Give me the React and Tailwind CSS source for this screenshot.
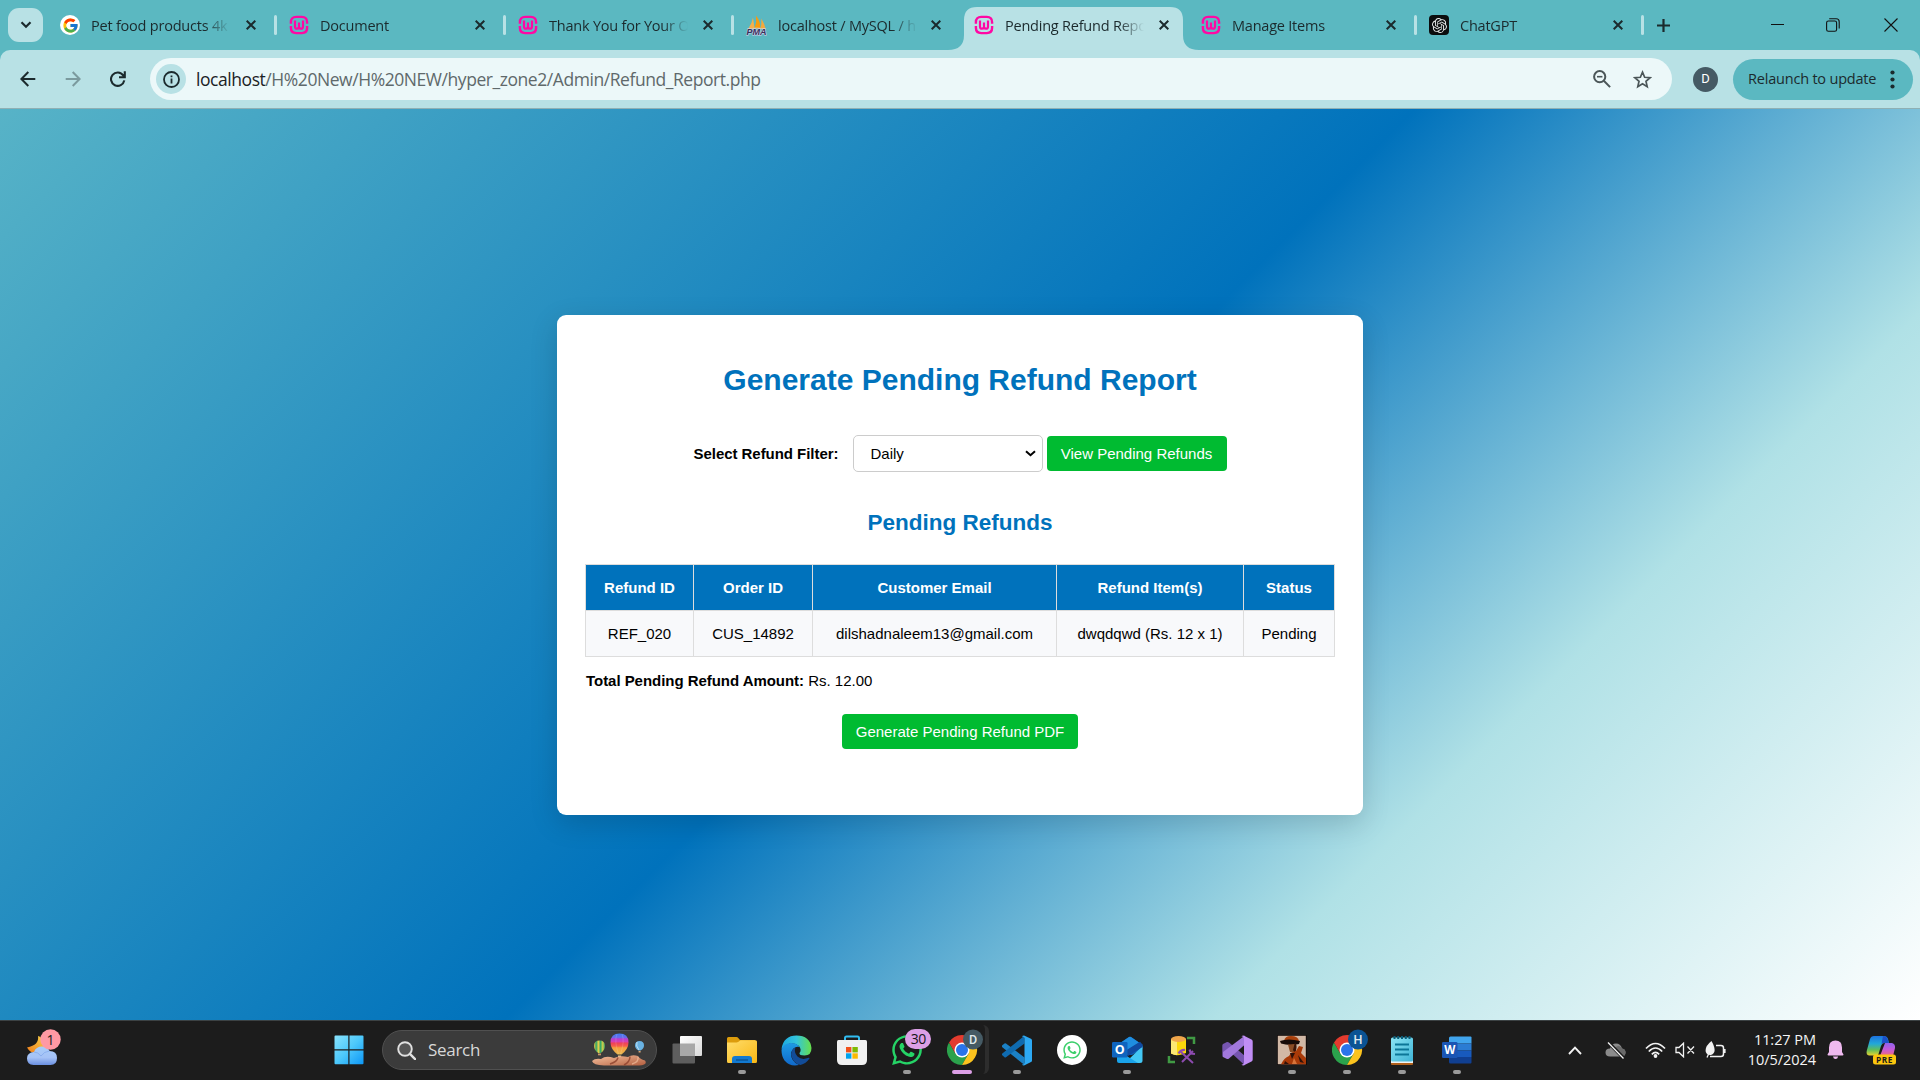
import React from "react";
import { FcGoogle } from "react-icons/fc";
import { FaWhatsapp } from "react-icons/fa";
import { SiOpenai } from "react-icons/si";

function WampIcon() {
  return (
    <svg width="20" height="20" viewBox="0 0 20 20" fill="none" stroke="#ff08a4" className="shrink-0">
      <path d="M1.900 8.700V7.200Q1.900 1.900 7.200 1.900H12.800Q18.100 1.900 18.100 7.200V8.700" strokeWidth="2.400" />
      <path d="M1.900 11V12.800Q1.900 18.100 7.200 18.100H12.800Q18.100 18.100 18.100 12.800V11" strokeWidth="2.400" />
      <path d="M6 5.600V11.400Q6 13.700 8 13.700T10 11.800V7.400M10 11.800Q10 13.700 12 13.700T14 11.400V5.600" strokeWidth="2.200" />
    </svg>
  );
}

function PmaIcon() {
  return (
    <svg width="21" height="21" viewBox="0 0 21 21" className="shrink-0">
      <path d="M2.500 13.500Q6 8 7 2.400L8.500 13.200Z" fill="#f7b04a" />
      <path d="M8.600 13Q11 7 10 .6Q14.500 6.500 14.300 13.200Z" fill="#f89c0e" />
      <path d="M14.600 13Q16 8 15 3.500Q18.700 8.500 19.500 13.500Z" fill="#f6a93b" />
      <path d="M1.500 14Q10 12.200 20 13.800" stroke="#e9c48d" fill="none" />
      <text x="0.500" y="20.400" textLength="20" lengthAdjust="spacingAndGlyphs" fontSize="8.200" fontWeight="800" fontStyle="italic" fontFamily="Liberation Sans" fill="#35305a" stroke="#d9d4ee" strokeWidth=".9" paintOrder="stroke">PMA</text>
    </svg>
  );
}

function GptIcon() {
  return (
    <span className="flex size-5 shrink-0 items-center justify-center rounded-[4px] bg-[#0b0d0e] text-[#e8eaea]">
      <SiOpenai size={15} />
    </span>
  );
}

function GIcon() {
  return (
    <span className="flex size-5 shrink-0 items-center justify-center rounded-full bg-white">
      <FcGoogle size={17} />
    </span>
  );
}

function CloseX() {
  return (
    <svg width="10" height="10" viewBox="0 0 10 10" stroke="#1b2a2d" strokeWidth="2" className="shrink-0">
      <path d="M.7.7l8.600 8.600M9.300.7L.7 9.300" />
    </svg>
  );
}

const tabs = [
  { title: "Pet food products 4k", icon: GIcon, width: "w-[229px]", sep: true },
  { title: "Document", icon: WampIcon, width: "w-[229px]", sep: true },
  { title: "Thank You for Your O", icon: WampIcon, width: "w-[228px]", sep: true },
  { title: "localhost / MySQL / h", icon: PmaIcon, width: "w-[228px]" },
  { title: "Pending Refund Repo", icon: WampIcon, width: "w-[227px]", active: true },
  { title: "Manage Items", icon: WampIcon, width: "w-[228px]", sep: true },
  { title: "ChatGPT", icon: GptIcon, width: "w-[227px]", sep: true },
];

function Tab({ title, icon: Icon, width, sep, active }) {
  return (
    <div className={"relative flex h-[50px] shrink-0 items-center " + width}>
      {active && (
        <svg className="absolute left-[-14px] top-[7px]" width="252" height="43" viewBox="0 0 252 43">
          <path d="M0 43Q16 43 16 28V13Q16 0 29 0H222Q235 0 235 13V28Q235 43 251 43Z" fill="#b8e1e5" />
        </svg>
      )}
      <div className="relative flex w-full items-center pl-3 pr-[21px]">
        <Icon />
        <span className="ml-[11px] mr-[12px] block flex-1 whitespace-nowrap pt-[1px] text-[14.500px] leading-[21px] tracking-[-0.220px] text-[#1b2a2d] [mask-image:linear-gradient(to_right,#000_114px,transparent_139px)]">
          {title}
        </span>
        <span className="flex"><CloseX /></span>
      </div>
      {sep && <span className="absolute right-0 top-[15px] h-5 w-[3px] rounded-full bg-[#b8e1e5]" />}
    </div>
  );
}

function TabStrip() {
  return (
    <div className="flex h-[50px] items-center bg-[#5bb8c1]">
      <div className="ml-2 mr-[5px] flex h-[34px] w-[35px] shrink-0 items-center justify-center rounded-[11px] bg-[#b8e1e5]">
        <svg width="12" height="8" viewBox="0 0 12 8" fill="none" stroke="#1b2a2d" strokeWidth="2.200"><path d="M1.500 1.300L6 5.700l4.500-4.400" /></svg>
      </div>
      {tabs.map((t) => <Tab key={t.title} {...t} />)}
      <svg className="ml-[13px] shrink-0" width="13" height="13" viewBox="0 0 13 13" stroke="#1b2a2d" strokeWidth="2.200"><path d="M6.500 0v13M0 6.500h13" /></svg>
      <div className="ml-auto mr-[22px] flex items-center">
        <svg width="13" height="14" viewBox="0 0 13 14" stroke="#111"><path d="M0 6.500h13" /></svg>
        <svg className="ml-[42px]" width="14" height="14" viewBox="0 0 14 14" fill="none" stroke="#111" strokeWidth="1.100">
          <rect x=".6" y="3" width="10" height="10.300" rx="1.800" />
          <path d="M3.200.7h7Q13.200.7 13.200 3.700V10.500" />
        </svg>
        <svg className="ml-[44px]" width="14" height="14" viewBox="0 0 14 14" stroke="#111" strokeWidth="1.100"><path d="M.5.5l13 13M13.500.5l-13 13" /></svg>
      </div>
    </div>
  );
}

function Toolbar() {
  return (
    <div className="bg-[#5bb8c1]">
      <div className="flex h-[59px] items-center rounded-t-[10px] border-b border-[#8fb0b4] bg-[#b8e1e5]">
        <svg className="ml-5 shrink-0" width="16" height="16" viewBox="0 0 16 16" fill="none" stroke="#1b2a2d" strokeWidth="2"><path d="M15.300 8H2M8.300 1L1.400 8l6.900 7" /></svg>
        <svg className="ml-[29px] shrink-0" width="16" height="16" viewBox="0 0 16 16" fill="none" stroke="#7b9a9e" strokeWidth="2"><path d="M.7 8H14M7.700 1l6.900 7-6.900 7" /></svg>
        <svg className="ml-[29px] shrink-0" width="16" height="16" viewBox="0 0 16 16" fill="none" stroke="#1b2a2d" strokeWidth="2.100"><path d="M14.300 9.400A6.700 6.700 0 1 1 13.200 4.300L14.600 6M14.800.3V6.200H9" /></svg>
        <div className="ml-6 flex h-[42px] w-[1522px] shrink-0 items-center rounded-full bg-[#ecf8f9] pl-[6px] pr-5">
          <span className="flex size-[30px] items-center justify-center rounded-full bg-[#b8e1e5]">
            <svg width="17" height="17" viewBox="0 0 17 17" fill="none" stroke="#1b2a2d" strokeWidth="1.800"><circle cx="8.500" cy="8.500" r="7.500" /><path d="M8.500 7.500v5M8.500 4.400v1.900" /></svg>
          </span>
          <span className="ml-[10px] whitespace-nowrap text-[17.500px] leading-6 tracking-[-0.440px] text-[#5f696b]"><span className="text-[#1b2225]">localhost</span>/H%20New/H%20NEW/hyper_zone2/Admin/Refund_Report.php</span>
          <svg className="ml-auto" width="18" height="18" viewBox="0 0 18 18" fill="none" stroke="#4b5658" strokeWidth="2"><circle cx="6.700" cy="6.700" r="5.600" /><path d="M10.800 10.800l6.300 6.300" /><path d="M4 6.700h5.400" strokeWidth="1.600" /></svg>
          <svg className="ml-[22px]" width="19" height="19" viewBox="0 0 19 19" fill="none" stroke="#4b5658" strokeWidth="1.700"><path d="M9.500 2.200l2.150 5.050 5.450.47-4.130 3.580 1.240 5.330-4.710-2.830-4.710 2.830 1.240-5.330L1.900 7.720l5.450-.47z" /></svg>
        </div>
        <span className="ml-[21px] flex size-[25px] shrink-0 items-center justify-center rounded-full bg-[#455a64] text-[13px] text-white [font-family:Roboto,sans-serif]">D</span>
        <div className="ml-[15px] flex h-[41px] w-[180px] shrink-0 items-center rounded-full bg-[#5bb8c1] pl-[15px]">
          <span className="whitespace-nowrap text-[14.500px] tracking-[-0.200px] text-[#1b2a2d]">Relaunch to update</span>
          <svg className="ml-auto mr-[18px]" width="5" height="19" viewBox="0 0 5 19" fill="#1b2a2d"><circle cx="2.500" cy="2.500" r="2.100" /><circle cx="2.500" cy="9.500" r="2.100" /><circle cx="2.500" cy="16.500" r="2.100" /></svg>
        </div>
      </div>
    </div>
  );
}

const columns = [
  ["Refund ID", "REF_020"],
  ["Order ID", "CUS_14892"],
  ["Customer Email", "dilshadnaleem13@gmail.com"],
  ["Refund Item(s)", "dwqdqwd (Rs. 12 x 1)"],
  ["Status", "Pending"],
];

function ReportPage() {
  return (
    <main className="flex h-[911px] items-center justify-center bg-[linear-gradient(135deg,#57b3c7_0%,#0072bc_50%,#b0e1e6_75%,#ffffff_100%)] text-[15px] text-black [font-family:'Liberation_Sans',Arial,sans-serif]">
      <section className="mt-[1px] h-[500px] w-[806px] rounded-[9px] bg-white px-7 pt-12 shadow-[0_8px_28px_rgba(0,0,0,0.15)]">
        <h1 className="text-center text-[30px] font-bold leading-[34px] text-[#0072bc]">Generate Pending Refund Report</h1>
        <form className="mt-[38px] flex items-center justify-center">
          <label className="pt-[1px] font-bold tracking-[-0.040px]">Select Refund Filter:</label>
          <div className="ml-[14px] flex h-[37px] w-[190px] items-center justify-between rounded-[5px] border border-[#ccc] bg-white pl-[17px] pr-[6px]">
            <span className="pt-[1px]">Daily</span>
            <svg width="11" height="7" viewBox="0 0 11 7" fill="none" stroke="#000" strokeWidth="2"><path d="M1 1.200L5.500 5.200 10 1.200" /></svg>
          </div>
          <button type="button" className="ml-1 h-[35px] w-[180px] rounded-[4px] bg-[#00bb31] pt-[2px] text-white">View Pending Refunds</button>
        </form>
        <h2 className="mt-[38px] text-center text-[22.500px] font-bold leading-[26px] text-[#0072bc]">Pending Refunds</h2>
        <table className="mt-[28px] w-[750px] table-fixed border-collapse text-center">
          <colgroup>
            <col className="w-[108px]" /><col className="w-[119px]" /><col className="w-[244px]" /><col className="w-[187px]" /><col className="w-[91px]" />
          </colgroup>
          <thead>
            <tr className="h-[46px] bg-[#0072bc] text-white">{columns.map(([h]) => <th key={h} className="border border-[#ddd] pt-[2px] font-bold">{h}</th>)}</tr>
          </thead>
          <tbody>
            <tr className="h-[46px] bg-[#f8f9fb]">{columns.map(([h, v]) => <td key={h} className="border border-[#ddd] pt-[1px]">{v}</td>)}</tr>
          </tbody>
        </table>
        <p className="mt-[15px] pl-[1px] leading-[18px]"><strong className="tracking-[-0.040px]">Total Pending Refund Amount:</strong> Rs. 12.00</p>
        <div className="mt-6 flex justify-center">
          <button type="button" className="h-[35px] w-[236px] rounded-[4px] bg-[#00bb31] pt-[1px] text-white">Generate Pending Refund PDF</button>
        </div>
      </section>
    </main>
  );
}

function WeatherIcon() {
  return (
    <svg width="36" height="38" viewBox="0 0 36 38">
      <defs>
        <linearGradient id="moon" x1="1" y1="0" x2="0" y2="1"><stop stopColor="#f8d24a" /><stop offset="1" stopColor="#f07d1a" /></linearGradient>
        <linearGradient id="cloud" x1="0" y1="0" x2="0" y2="1"><stop stopColor="#a9cdf9" /><stop offset=".6" stopColor="#a5c2f6" /><stop offset="1" stopColor="#6a8fe0" /></linearGradient>
      </defs>
      <path d="M12 7Q13.500 16 1 18.500Q4 24 10 24Q19 22 19 14Q16 8 12 7Z" fill="url(#moon)" />
      <path d="M7.500 36Q1 35.500 1 29.500T8 23Q10 17.500 16 17.500T23.500 22Q31 22 31 29T24.500 36Z" fill="url(#cloud)" />
      <path d="M8 23Q12 23 15 27Q18 22.500 23.500 22" fill="none" stroke="#7fa5ea" opacity=".7" />
      <circle cx="24.500" cy="10.500" r="10.200" fill="#ff99a4" />
      <text x="24.500" y="15.500" textAnchor="middle" fontSize="14" fontFamily="Open Sans" fill="#1b1b1b">1</text>
    </svg>
  );
}

function WindowsIcon() {
  return (
    <svg width="30" height="30" viewBox="0 0 30 30">
      <defs><linearGradient id="win" gradientUnits="userSpaceOnUse" x1="0" y1="0" x2="30" y2="30"><stop stopColor="#8be4fd" /><stop offset=".5" stopColor="#4cc8fb" /><stop offset="1" stopColor="#0a94f5" /></linearGradient></defs>
      <path fill="url(#win)" d="M.5 1.500Q.5.500 1.500.500H14.300V14.300H.5ZM15.500.500H28.500Q29.500.500 29.500 1.500V14.300H15.500ZM.5 15.500H14.300V29.300H1.500Q.5 29.300.5 28.300ZM15.500 15.500H29.500V28.300Q29.500 29.300 28.500 29.300H15.500Z" />
    </svg>
  );
}

function Balloons() {
  return (
    <svg width="55" height="34" viewBox="0 0 55 34">
      <defs>
        <linearGradient id="bal" x1="0" y1="0" x2="0" y2="1">
          <stop stopColor="#3c7bf0" /><stop offset=".2" stopColor="#6d6be8" /><stop offset=".25" stopColor="#b63fd0" /><stop offset=".4" stopColor="#d840b0" /><stop offset=".45" stopColor="#ee4058" /><stop offset=".6" stopColor="#f4604a" /><stop offset=".68" stopColor="#f5a03e" /><stop offset="1" stopColor="#e6b650" />
        </linearGradient>
        <linearGradient id="balg"><stop stopColor="#f0c23c" /><stop offset=".2" stopColor="#2fa86a" /><stop offset=".4" stopColor="#e9cf48" /><stop offset=".6" stopColor="#2fa86a" /><stop offset=".8" stopColor="#d9cf48" /><stop offset="1" stopColor="#2f9a6a" /></linearGradient>
        <linearGradient id="rock" x1="0" y1="0" x2="1" y2="1"><stop stopColor="#f6c3a0" /><stop offset="1" stopColor="#b45f40" /></linearGradient>
      </defs>
      <path d="M2 13Q2 7.500 7.500 7.500T13 13Q13 17 8.800 20H6.200Q2 17 2 13Z" fill="url(#balg)" />
      <path d="M6 20.500h3v1.800H6z" fill="#c89a68" />
      <path d="M18.500 9.500Q18.500.500 27.500.500T36.500 9.500Q36.500 16 29.500 21.500H25.500Q18.500 16 18.500 9.500Z" fill="url(#bal)" />
      <path d="M25 1Q22 8 26.500 21M30 1Q33 8 28.500 21" fill="none" stroke="#fff" opacity=".15" />
      <path d="M26 22.500h3.200v2.500H26z" fill="#e9c890" />
      <path d="M43 12.500Q43 8 47.500 8T52 12.500Q52 15.500 48.500 17.500H46.500Q43 15.500 43 12.500Z" fill="#69b2e2" />
      <path d="M45 9Q43.500 13 47 17" fill="none" stroke="#bfe2f5" />
      <path d="M46.600 18h2v1.500h-2z" fill="#d9a878" />
      <path d="M0 28Q3 25 9 26Q14 22 22 25Q28 22 36 24Q40 21 46 23Q48 26 53 27.500Q56 32 47 32.500H12Q1 32 0 28Z" fill="url(#rock)" />
      <path d="M18 31Q25 29 26 24.500M32 32Q38 29 38 23.500" stroke="#8c402c" strokeWidth="1.500" fill="none" opacity=".8" />
      <path d="M40 31Q47 29 46 24" stroke="#f7c9a8" strokeWidth="1.500" fill="none" opacity=".6" />
    </svg>
  );
}

function TaskViewIcon() {
  return (
    <svg width="30" height="30" viewBox="0 0 30 30">
      <defs><linearGradient id="tv" x1="0" y1="0" x2="1" y2="1"><stop stopColor="#fff" /><stop offset="1" stopColor="#d9d9d9" /></linearGradient></defs>
      <rect x="0.500" y="8.500" width="22.500" height="20" rx="1" fill="#5e5e5e" />
      <rect x="8" y="1" width="22" height="20" rx="1" fill="url(#tv)" />
      <path d="M8 8.500h15V21H8z" fill="#a8a8a8" />
    </svg>
  );
}

function FolderIcon() {
  return (
    <svg width="30" height="30" viewBox="0 0 30 30">
      <defs><linearGradient id="fold" x1="0" y1="0" x2="1" y2="1"><stop stopColor="#ffdd6b" /><stop offset="1" stopColor="#f9b714" /></linearGradient></defs>
      <path d="M0 3.500Q0 2 1.500 2H9.500Q10.500 2 11.500 3.200L13 5H28V12H0Z" fill="#dc9c0c" />
      <path d="M0 7.500H9.500Q10.500 7.500 11.500 6.700L13.500 5.200H28.500Q30 5.200 30 6.700V26.500Q30 28 28.500 28H1.500Q0 28 0 26.500Z" fill="url(#fold)" />
      <path d="M5 28V24Q5 21 8 21H22Q25 21 25 24V28Z" fill="#1279d0" />
      <path d="M9 25H21" stroke="#0a4f8f" strokeWidth="1.300" />
    </svg>
  );
}

function EdgeIcon() {
  return (
    <svg width="31" height="31" viewBox="0 0 31 31">
      <defs>
        <linearGradient id="e1"><stop stopColor="#1ca8e0" /><stop offset=".5" stopColor="#33c4dc" /><stop offset="1" stopColor="#67e04a" /></linearGradient>
        <linearGradient id="e2" x1="0" y1="0" x2="0" y2="1"><stop stopColor="#1e9be4" /><stop offset="1" stopColor="#1069cb" /></linearGradient>
      </defs>
      <path d="M.5 14Q2.500.500 15.500.500Q29 .5 30.500 13Q30.500 20.500 23.500 20.500Q18 20.500 18.500 18Q21 15 18 11Q10 4.500.5 14Z" fill="url(#e1)" />
      <path d="M.5 15Q2 8 10 8Q16 8 18.500 12Q12.500 10.500 10 18Q9.500 26 18 30Q9 32 3.500 25.500Q.5 21 .5 15Z" fill="url(#e2)" />
      <path d="M14.500 12.500Q9 15 10.500 21.500Q13 29 19.500 30Q25 28.500 28.500 23.500Q28.500 22.500 27.500 22.800Q21 25.500 16.500 21.500Q12.500 17 14.500 12.500Z" fill="#124c98" />
    </svg>
  );
}

function StoreIcon() {
  return (
    <svg width="30" height="30" viewBox="0 0 30 30">
      <path d="M8 6V3Q8 1.500 9.500 1.500H20.500Q22 1.500 22 3V6" fill="none" stroke="#31bdf2" strokeWidth="2" />
      <path d="M0 6.500Q0 5 1.500 5H28.500Q30 5 30 6.500V25Q30 30 25 30H5Q0 30 0 25Z" fill="#f0f0f0" />
      <path d="M9 12h5.400v5.400H9z" fill="#f1511b" /><path d="M15.400 12h5.400v5.400h-5.400z" fill="#7fba00" /><path d="M9 18.300h5.400v5.400H9z" fill="#00a4ef" /><path d="M15.400 18.300h5.400v5.400h-5.400z" fill="#fbb900" />
    </svg>
  );
}

function WhatsAppBadge() {
  return (
    <span className="relative flex size-[31px] items-center justify-center text-[#25d366]">
      <FaWhatsapp size={34} className="shrink-0" />
      <span className="absolute -top-[6px] left-[14px] flex h-5 w-[26px] items-center justify-center rounded-full bg-[#dc9fe6] text-[14px] tracking-[-0.500px] text-[#161616]">30</span>
    </span>
  );
}

function ChromeIcon({ letter, color }) {
  return (
    <svg width="40" height="40" viewBox="0 0 40 40" className="shrink-0">
      <path d="M2 14.500A15 15 0 0 0 15 37L21.500 25.800L15 22L8.500 25.800Z" fill="#2ba24c" />
      <path d="M28 14.500A15 15 0 0 1 15 37L21.500 25.800Q23 20 19 15H28.300Z" fill="#fcc31e" />
      <path d="M2 14.500A15 15 0 0 1 28 14.500V15H15Q9 15 8 21L8.500 25.800Z" fill="#e33b2e" />
      <circle cx="15" cy="22" r="7.500" fill="#fff" /><circle cx="15" cy="22" r="6" fill="#2a74ea" />
      <circle cx="26" cy="11.500" r="10" fill={color} />
      <text x="26" y="16" textAnchor="middle" fontSize="12.500" fontWeight="500" fontFamily="Roboto" fill="#dfe7ec">{letter}</text>
    </svg>
  );
}

function VsCodeIcon() {
  return (
    <svg width="30" height="31" viewBox="0 0 30 31">
      <path d="M0 10.500L2.500 8.500Q3.300 8 4 8.600L22.500 22.500V30L.3 12.200Q-.4 11.400 0 10.500Z" fill="#1b81c6" />
      <path d="M0 20L2.500 22.300Q3.300 22.800 4 22.200L22.500 8.500V.700L.3 18.500Q-.4 19.200 0 20Z" fill="#0f6bb0" />
      <path d="M22 .5L29 3.800Q30 4.400 30 5.500V25.500Q30 26.600 29 27.100L22 30.500Q20.500 30.500 20 29.500Q22.500 29.500 22.500 28V3Q22.500 1.500 20 1.500Q20.500.500 22 .5Z" fill="#2da9f3" />
    </svg>
  );
}

function WhatsAppRound() {
  return <span className="flex size-[30px] items-center justify-center rounded-full bg-white text-[#3ccf6b]"><FaWhatsapp size={20} /></span>;
}

function OutlookIcon() {
  return (
    <svg width="31" height="30" viewBox="0 0 31 30">
      <path d="M5 10L17 2Q18 1.500 19 2L30.500 10V14L20 20H5Z" fill="#0f5fb4" />
      <path d="M9 7.500L17 2Q18 1.500 19 2L27 7.500L14 16H9Z" fill="#1f8ee0" />
      <path d="M13 28L30.500 11V25.500Q30.500 28 28 28Z" fill="#43c8f5" />
      <path d="M13 16L28 6.800L30.500 9.500V12L16 21Z" fill="#104aa0" />
      <path d="M5 15L26 28H7Q5 28 5 26Z" fill="#1aa3ea" />
      <rect x="0" y="7" width="15.500" height="15.500" rx="1.200" fill="#0f64be" />
      <text x="7.800" y="19" textAnchor="middle" fontSize="12.500" fontWeight="700" fontFamily="Open Sans" fill="#fff">O</text>
    </svg>
  );
}

function SsmsIcon() {
  return (
    <svg width="30" height="30" viewBox="0 0 30 30" fill="none">
      <path d="M20 3h7v6M2 21v6h6" stroke="#409a44" strokeWidth="2.500" />
      <path d="M4 4v14.500Q11 22 19 18V4Z" fill="#fbd80b" /><path d="M4 4v14.500Q7 20 10 20.200V4Z" fill="#fbe874" />
      <ellipse cx="11.500" cy="4" rx="7.500" ry="3" fill="#f0a64b" />
      <path d="M15 27L26 16M14 17l12 11" stroke="#8d4bb0" strokeWidth="2" /><path d="M11.500 18.500Q14 14.500 18 15M22.500 14.500l1.500 4 4 .500" stroke="#8d4bb0" strokeWidth="2.200" />
    </svg>
  );
}

function VisualStudioIcon() {
  return (
    <svg width="31" height="31" viewBox="0 0 31 31">
      <path d="M1 9L5 7Q6 6.700 7 7.500L23 21V30.500L5 14V17L1 22Q.3 21.500.3 20.500V10.500Q.3 9.500 1 9Z" fill="#7655b0" />
      <path d="M1 22L5 24Q6 24.300 7 23.500L23 9.500V.5L1 17Z" fill="#a178dc" />
      <path d="M21.500.500L29.500 4.500Q30.700 5.200 30.700 6.500V24.500Q30.700 25.800 29.500 26.500L21.500 30.500Q20 30.500 19.500 29.500Q22 30 22 27.500V3.500Q22 1 19.500 1.500Q20 .5 21.500.500Z" fill="#c18df5" />
    </svg>
  );
}

function PortraitIcon() {
  return (
    <svg width="30" height="30" viewBox="0 0 30 30">
      <path d="M0 0h30v30H0z" fill="#120c0a" /><path d="M.8.8h28v28.400H.8z" fill="#d2b9a6" />
      <path d="M7 6Q8 .8 14 1Q21 1 22 6L20 8H8Z" fill="#a8400c" />
      <path d="M3 6Q11 3 23 6L22 9Q12 11 4 8.500Z" fill="#160b08" />
      <path d="M11 9.500L19 9Q20 14 17.500 18L13 17Z" fill="#8b4c24" /><path d="M18 7Q21 12 18 18L16 15Z" fill="#3a1508" />
      <path d="M4 29.200Q7 23 12 21L14 18L19 16L22 11L26 12L24 18L29 23V29.200Z" fill="#a93a08" />
      <path d="M13 18L18 18L15 24ZM8 26L12 29H7ZM21 20L27 28L23 27Z" fill="#30120a" /><path d="M17 23L20 29H15Z" fill="#d8743a" />
    </svg>
  );
}

function NotepadIcon() {
  return (
    <svg width="24" height="31" viewBox="0 0 24 31">
      <defs><linearGradient id="note" x1="0" y1="0" x2="1" y2="1"><stop stopColor="#8be4f3" /><stop offset="1" stopColor="#3fb4d6" /></linearGradient></defs>
      <path d="M1 26h22v3Q23 30 22 30H2Q1 30 1 29Z" fill="#b0601c" /><path d="M1 25h22v3H1z" fill="#eef4f5" />
      <rect x="1" y="2.500" width="22" height="24" rx="1.500" fill="url(#note)" />
      <path d="M4.500 1v3M8.200 1v3M12 1v3M15.800 1v3M19.500 1v3" stroke="#0b5c78" strokeWidth="2" />
      <path d="M5 9.500h14M5 14.500h14M5 19.500h14" stroke="#0c7697" strokeWidth="1.900" />
    </svg>
  );
}

function WordIcon() {
  return (
    <svg width="30" height="30" viewBox="0 0 30 30">
      <path d="M7 3Q7 1.500 8.500 1.500H28.500Q29.500 1.500 29.500 2.500V8.500H7Z" fill="#41a5ee" /><path d="M7 8.500h22.500v7H7z" fill="#2b7cd3" /><path d="M7 15.500h22.500v6.500H7z" fill="#185abd" /><path d="M7 22h22.500v5.500Q29.500 28.500 28.500 28.500H8.500Q7 28.500 7 27Z" fill="#103f91" />
      <rect x="0" y="7" width="15.500" height="16" rx="1.300" fill="#1a55b4" />
      <text x="7.800" y="19" textAnchor="middle" fontSize="11.500" fontWeight="700" fontFamily="Open Sans" fill="#fff">W</text>
    </svg>
  );
}

const apps = [
  { id: "taskview", el: <TaskViewIcon /> },
  { id: "files", el: <FolderIcon />, run: true },
  { id: "edge", el: <EdgeIcon /> },
  { id: "store", el: <StoreIcon /> },
  { id: "whatsapp", el: <WhatsAppBadge />, run: true },
  { id: "chrome-d", el: <span className="-mt-[4px] ml-[10px] flex"><ChromeIcon letter="D" color="#455a64" /></span>, active: true },
  { id: "vscode", el: <VsCodeIcon />, run: true },
  { id: "whatsapp-web", el: <WhatsAppRound /> },
  { id: "outlook", el: <OutlookIcon />, run: true },
  { id: "ssms", el: <SsmsIcon /> },
  { id: "vs", el: <VisualStudioIcon /> },
  { id: "game", el: <PortraitIcon />, run: true },
  { id: "chrome-h", el: <span className="-mt-[4px] ml-[10px] flex"><ChromeIcon letter="H" color="#0b5394" /></span>, run: true },
  { id: "notepad", el: <NotepadIcon />, run: true },
  { id: "word", el: <WordIcon />, run: true },
];

function Tray() {
  return (
    <div className="ml-auto flex h-full items-center">
      <svg width="14" height="9" viewBox="0 0 14 9" fill="none" stroke="#f2f2f2" strokeWidth="1.900"><path d="M1 8l6-6.300L13 8" /></svg>
      <svg className="ml-[23px]" width="21" height="17" viewBox="0 0 21 17">
        <path d="M5 14.500Q.5 14.500.5 10.500T5 6.500Q6.500 1.500 11 1.500T17 6.500Q20.500 7 20.500 10.500T17 14.500Z" fill="#8b8b8b" /><path d="M9 7Q13 1.500 17 6.500Q20.500 7 20.500 10.500T17 14.500Z" fill="#6a6a6a" />
        <path d="M3.500.500l15 15.500" stroke="#1c1c1c" strokeWidth="3.500" /><path d="M3 .5l15.500 16" stroke="#f5f5f5" strokeWidth="1.300" />
      </svg>
      <svg className="ml-[19px]" width="21" height="17" viewBox="0 0 21 17" fill="none" stroke="#f2f2f2" strokeWidth="1.700">
        <path d="M1 6.500Q10.500-3.500 20 6.500M3.800 9.500Q10.500 2.500 17.200 9.500M6.800 12.300Q10.500 8.500 14.200 12.300" /><circle cx="10.500" cy="14" r="1.900" fill="#f2f2f2" stroke="none" />
      </svg>
      <svg className="ml-[9px]" width="20" height="16" viewBox="0 0 20 16" fill="none" stroke="#f2f2f2" strokeWidth="1.300"><path d="M1 5.500H4L8.500 1.200V14.800L4 10.500H1ZM12.500 4.500l6.500 7M19 4.500l-6.500 7" /></svg>
      <svg className="ml-[10px]" width="22" height="18" viewBox="0 0 22 18" fill="none" stroke="#f2f2f2">
        <path d="M11 4.500H16Q18.500 4.500 18.500 7V13Q18.500 15.500 16 15.500H5" strokeWidth="1.500" /><path d="M19.500 8v4" strokeWidth="2.200" />
        <path d="M6.500 0Q-.5 5.500.8 11Q2 14.500 6 14Q13 11.500 6.500 0Z" fill="#f2f2f2" stroke="none" /><path d="M3.600 13L2 16.500" strokeWidth="1.300" />
      </svg>
      <div className="-mt-[1px] ml-[12px] w-[77px] whitespace-nowrap text-right text-[14.500px] leading-5 tracking-[-0.050px] text-[#f5f5f5]">
        <div>11:27 PM</div><div>10/5/2024</div>
      </div>
      <svg className="ml-[11px]" width="17" height="20" viewBox="0 0 17 20" fill="#efb9ef"><path d="M8.500.500Q15 .5 15 7.500V12L16.500 14.500Q16.500 15.500 15.500 15.500H1.500Q.5 15.500.5 14.500L2 12V7.500Q2 .5 8.500.500ZM6 16.500h5.200Q10.500 19 8.500 19T6 16.500Z" /></svg>
      <svg className="ml-[22px] mr-[23px]" width="31" height="30" viewBox="0 0 31 30">
        <defs>
          <linearGradient id="cp1" x1="0" y1="0" x2="0" y2="1"><stop stopColor="#1d73e0" /><stop offset=".4" stopColor="#22a8d8" /><stop offset=".7" stopColor="#5fbd5c" /><stop offset="1" stopColor="#e8d22e" /></linearGradient>
          <linearGradient id="cp2" x1="0" y1="0" x2="0" y2="1"><stop stopColor="#8f63ee" /><stop offset=".5" stopColor="#c65bd8" /><stop offset="1" stopColor="#f0687c" /></linearGradient>
        </defs>
        <path d="M8 1H18Q21 1 22 4L23 8H18Q16 8 15 11L12.500 19Q12 20.500 10 20.500H3Q0 20 .7 16L4 4Q5 1 8 1Z" fill="url(#cp1)" />
        <path d="M17 1Q20.500 1 21.500 4L23 8H18Q16 8 15.500 9Z" fill="#1b50c8" />
        <path d="M19 8H26Q29.500 9 29 13L27 21H14Z" fill="url(#cp2)" />
        <rect x="7" y="19.500" width="23" height="10" rx="2.500" fill="#fcc60e" />
        <text x="18.500" y="27.600" textAnchor="middle" fontSize="8.300" fontWeight="700" letterSpacing=".5" fontFamily="Open Sans" fill="#1b1b1b">PRE</text>
      </svg>
    </div>
  );
}

function Taskbar() {
  return (
    <footer className="flex h-[60px] items-center bg-[#1c1c1c] shadow-[inset_0_1px_0_#3c4244]">
      <div className="-mt-[5px] ml-[26px] flex w-[308px] shrink-0"><WeatherIcon /></div>
      <WindowsIcon />
      <div className="ml-[18px] mr-[2px] flex h-10 w-[275px] shrink-0 items-center rounded-full border border-[#505050] bg-[#3b3b3b] pl-[14px] pr-[9px]">
        <svg width="19" height="19" viewBox="0 0 19 19" fill="none" stroke="#e0e0e0" strokeWidth="1.900"><circle cx="8" cy="8" r="6.800" fill="#555" /><path d="M12.900 12.900l5.200 5.200" strokeWidth="2.400" strokeLinecap="round" /></svg>
        <span className="ml-3 text-[17px] tracking-[-0.300px] text-[#d8d8d8]">Search</span>
        <span className="ml-auto"><Balloons /></span>
      </div>
      {apps.map((a) => (
        <div key={a.id} className="relative flex h-full w-[55.070px] shrink-0 items-center justify-center">
          {a.active && <span className="absolute right-0 top-[5px] h-[49px] w-3 rounded-r-md border-r-[4px] border-[#2d2d2d]" />}
          <span className="relative flex">{a.el}</span>
          {a.run && <span className="absolute bottom-[6px] left-[23.500px] h-1 w-2 rounded-full bg-[#9a9a9a]" />}
          {a.active && <span className="absolute bottom-[6px] left-[17.500px] h-1 w-5 rounded-full bg-[#dc9fe6]" />}
        </div>
      ))}
      <Tray />
    </footer>
  );
}

export default function App() {
  return (
    <div className="flex h-[1080px] w-[1920px] flex-col overflow-hidden [font-family:'Open_Sans','Noto_Sans',sans-serif]">
      <TabStrip />
      <Toolbar />
      <ReportPage />
      <Taskbar />
    </div>
  );
}
